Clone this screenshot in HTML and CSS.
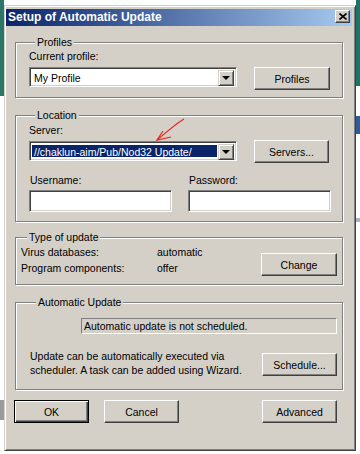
FILE: index.html
```html
<!DOCTYPE html>
<html lang="en">

<head>
    <meta charset="UTF-8">
    <meta name="viewport" content="width=device-width, initial-scale=1.0">
    <title>Setup of Automatic Update</title>
    <link rel="stylesheet" href="styles.css">
</head>

<body>
    <div class="screen">
        <div class="edge edge-left"></div>
        <div class="window">
            <div class="titlebar">
                <span class="title">Setup of Automatic Update</span>
                <span class="close">
                    <svg width="8" height="7" viewBox="0 0 8 7">
                        <path d="M0.5 0.5L7.5 6.5M7.5 0.5L0.5 6.5" stroke="#000" stroke-width="1.7" />
                    </svg>
                </span>
            </div>
            <div class="content">
                <div class="group profiles">
                    <span class="legend">Profiles</span>
                    <div class="pair">
                        <label class="caption">Current profile:</label>
                        <div class="combo"><span class="combo-text">My Profile</span><span class="drop"></span></div>
                        <button class="btn">Profiles</button>
                    </div>
                </div>

                <div class="group location">
                    <span class="legend">Location</span>
                    <div class="pair">
                        <label class="caption">Server:</label>
                        <div class="combo"><span class="combo-text selected">//chaklun-aim/Pub/Nod32 Update/</span><span class="drop"></span></div>
                        <button class="btn btn-servers">Servers...</button>
                    </div>
                    <div class="login">
                        <div class="login-field">
                            <label class="caption">Username:</label>
                            <div class="edit"></div>
                        </div>
                        <div class="login-field">
                            <label class="caption">Password:</label>
                            <div class="edit"></div>
                        </div>
                    </div>
                </div>

                <div class="group type">
                    <span class="legend">Type of update</span>
                    <div class="type-body">
                        <div class="type-table">
                            <span>Virus databases:</span><span>automatic</span>
                            <span>Program components:</span><span>offer</span>
                        </div>
                        <button class="btn btn-change">Change</button>
                    </div>
                </div>

                <div class="group auto">
                    <span class="legend">Automatic Update</span>
                    <div class="status">Automatic update is not scheduled.</div>
                    <div class="auto-body">
                        <p class="note">Update can be automatically executed via<br>scheduler. A task can be added using Wizard.</p>
                        <button class="btn btn-schedule">Schedule...</button>
                    </div>
                </div>

                <div class="actions">
                    <button class="btn btn-default">OK</button>
                    <button class="btn btn-cancel">Cancel</button>
                    <button class="btn btn-advanced">Advanced</button>
                </div>
            </div>
        </div>
        <div class="edge edge-right"></div>

        <!-- red marker drawn over the server box -->
        <svg class="marker" width="40" height="30" viewBox="0 0 40 30">
            <path d="M34 1C27 5 20 11 7 22" fill="none" stroke="#e8281e" stroke-width="1.2" />
            <path d="M13 13L7 22L21 19" fill="none" stroke="#e8281e" stroke-width="1.2" />
        </svg>
    </div>
</body>

</html>
```

FILE: styles.css
```css
* {
    box-sizing: border-box;
}

html,
body {
    margin: 0;
}

body {
    width: 360px;
    height: 454px;
    overflow: hidden;
    background: #fff;
    font-family: "Liberation Sans", Arial, sans-serif;
    font-size: 10.5px;
    color: #000;
}

.screen {
    position: relative;
    display: flex;
    align-items: flex-start;
    height: 454px;
}

.edge {
    flex: none;
    width: 4px;
    height: 454px;
}

.edge-left {
    background: linear-gradient(to bottom, #2b7767 0 96px, #fff 96px 400px, #9a9a9a 400px 420px, #fff 420px);
}

.edge-right {
    background: linear-gradient(to bottom, #1f7264 0 86px, #fff 86px 116px, #2e5e96 116px 134px, #fff 134px 218px, #aab2c0 218px 222px, #fff 222px);
}

.window {
    flex: none;
    width: 352px;
    height: 446px;
    margin-top: 5px;
    padding: 3px 3px 3px 1px;
    background: #d4d0c8;
    border: 1px solid;
    border-color: #d4d0c8 #404040 #404040 #d4d0c8;
    box-shadow: inset 1px 1px #fff, inset -1px -1px #808080;
    display: flex;
    flex-direction: column;
}

.titlebar {
    height: 17px;
    padding-left: 2px;
    display: flex;
    align-items: flex-start;
    background: linear-gradient(to right, #0a246a, #a6caf0);
    color: #fff;
}

.title {
    font-weight: bold;
    font-size: 12px;
    line-height: 17px;
}

.close {
    width: 15px;
    height: 13px;
    margin: 1px 2px 0 auto;
    display: flex;
    align-items: center;
    justify-content: center;
    background: #d4d0c8;
    border: 1px solid;
    border-color: #fff #404040 #404040 #fff;
    box-shadow: inset -1px -1px #808080;
}

.content {
    padding: 16px 9px 0 9px;
    display: flex;
    flex-direction: column;
}

.group {
    border: 1px solid #808080;
    box-shadow: 1px 1px 0 #fff, inset 1px 1px 0 #fff;
}

.legend {
    display: block;
    width: fit-content;
    height: 12px;
    margin: -7px 0 0 6px;
    padding: 0 2px;
    line-height: 12px;
    background: #d4d0c8;
}

.caption {
    display: block;
    line-height: 12px;
}

/* label over combo, button beside it */
.pair {
    display: grid;
    grid-template-columns: 208px 76px;
    justify-content: space-between;
    align-items: start;
}

.pair .caption {
    grid-column: 1 / 3;
}

.combo,
.edit {
    background: #fff;
    border: 1px solid;
    border-color: #808080 #fff #fff #808080;
    box-shadow: inset 1px 1px #404040, inset -1px -1px #d4d0c8;
}

.combo {
    height: 20px;
    margin-top: 5px;
    padding: 2px;
    display: flex;
}

.combo-text {
    flex: 1;
    padding-left: 2px;
    line-height: 16px;
    white-space: nowrap;
    overflow: hidden;
}

.combo-text.selected {
    margin: 1px 1px 1px 0;
    padding-left: 2px;
    line-height: 14px;
    background: #0a246a;
    color: #fff;
}

.drop {
    flex: none;
    width: 16px;
    height: 16px;
    position: relative;
    background: #d4d0c8;
    border: 1px solid;
    border-color: #d4d0c8 #404040 #404040 #d4d0c8;
    box-shadow: inset 1px 1px #fff, inset -1px -1px #808080;
}

.drop::after {
    content: "";
    position: absolute;
    left: 3px;
    top: 5px;
    border-style: solid;
    border-width: 4px 4px 0 4px;
    border-color: #000 transparent transparent transparent;
}

.btn {
    height: 23px;
    width: 76px;
    padding: 0;
    font-family: inherit;
    font-size: inherit;
    color: #000;
    background: #d4d0c8;
    border: 1px solid;
    border-color: #fff #404040 #404040 #fff;
    box-shadow: inset -1px -1px #808080, inset 1px 1px #d4d0c8;
}

.pair .btn {
    margin-top: 5px;
}

.btn-default {
    border-color: #000;
    box-shadow: inset 1px 1px #fff, inset -1px -1px #404040, inset -2px -2px #808080;
}

/* Profiles */
.profiles {
    padding: 0 12px 7px 13px;
}

.profiles .caption {
    margin-top: 2px;
}

/* Location */
.location {
    margin-top: 17px;
    padding: 0 12px 9px 13px;
}

.location .pair .caption {
    margin-top: 3px;
}

.location .pair .btn-servers {
    margin-top: 4px;
    width: 75px;
}

.login {
    margin-top: 11px;
    display: grid;
    grid-template-columns: 143px 143px;
    column-gap: 16px;
}

.login .caption {
    padding-left: 1px;
}

.edit {
    height: 22px;
    margin-top: 4px;
}

/* Type of update */
.type {
    margin-top: 15px;
    padding: 0 5px 8px 5px;
}

.type-body {
    display: flex;
    align-items: flex-start;
    margin-top: 1px;
}

.type-table {
    display: grid;
    grid-template-columns: 136px auto;
    line-height: 16px;
}

.btn-change {
    width: 76px;
    margin: 9px 0 0 auto;
}

/* Automatic Update */
.auto {
    margin-top: 17px;
    padding: 0 5px 12px 14px;
}

.status {
    width: 256px;
    height: 16px;
    margin: 10px 0 0 auto;
    padding-left: 2px;
    line-height: 14px;
    border: 1px solid;
    border-color: #808080 #fff #fff #808080;
    white-space: nowrap;
}

.auto-body {
    display: flex;
    align-items: flex-start;
}

.note {
    margin: 16px 0 0 0;
    line-height: 13.5px;
    white-space: nowrap;
}

.btn-schedule {
    width: 75px;
    margin: 19px 0 0 auto;
}

/* dialog buttons */
.actions {
    margin-top: 10px;
    margin-left: -1px;
    padding-right: 6px;
    display: flex;
}

.actions .btn {
    width: 75px;
}

.actions .btn-cancel {
    margin-left: 15px;
}

.actions .btn-advanced {
    margin-left: auto;
}

.marker {
    position: absolute;
    left: 150px;
    top: 118px;
}
```
